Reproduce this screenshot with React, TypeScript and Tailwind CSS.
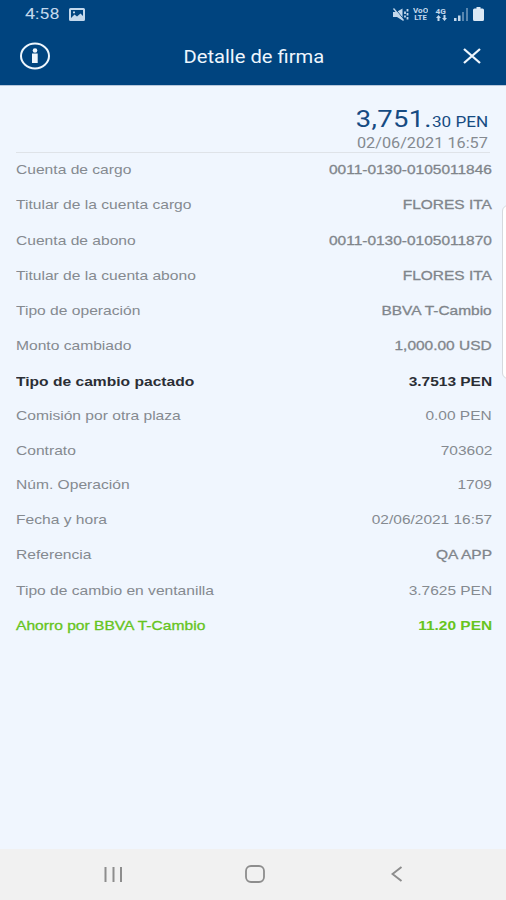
import { clsx } from "clsx";

type Tone = "plain" | "medium" | "strong" | "saving";

type Detail = {
  label: string;
  value: string;
  tone: Tone;
  height?: string;
};

const details: Detail[] = [
  { label: "Cuenta de cargo", value: "0011-0130-0105011846", tone: "medium" },
  { label: "Titular de la cuenta cargo", value: "FLORES ITA", tone: "medium", height: "h-9" },
  { label: "Cuenta de abono", value: "0011-0130-0105011870", tone: "medium" },
  { label: "Titular de la cuenta abono", value: "FLORES ITA", tone: "medium" },
  { label: "Tipo de operación", value: "BBVA T-Cambio", tone: "medium" },
  { label: "Monto cambiado", value: "1,000.00 USD", tone: "medium", height: "h-9" },
  { label: "Tipo de cambio pactado", value: "3.7513 PEN", tone: "strong", height: "h-[34px]" },
  { label: "Comisión por otra plaza", value: "0.00 PEN", tone: "plain" },
  { label: "Contrato", value: "703602", tone: "plain", height: "h-[34px]" },
  { label: "Núm. Operación", value: "1709", tone: "plain" },
  { label: "Fecha y hora", value: "02/06/2021 16:57", tone: "plain" },
  { label: "Referencia", value: "QA APP", tone: "medium", height: "h-9" },
  { label: "Tipo de cambio en ventanilla", value: "3.7625 PEN", tone: "plain" },
  { label: "Ahorro por BBVA T-Cambio", value: "11.20 PEN", tone: "saving" },
];

const labelTone: Record<Tone, string> = {
  plain: "text-[#858a90]",
  medium: "text-[#858a90]",
  strong: "font-bold text-[#2b2e35]",
  saving: "text-[#66c420] [-webkit-text-stroke:0.3px_#66c420]",
};

const valueTone: Record<Tone, string> = {
  plain: "text-[#858a90]",
  medium: "text-[#80858b] [-webkit-text-stroke:0.3px_#80858b]",
  strong: "font-bold text-[#2b2e35]",
  saving: "font-bold text-[#66c420]",
};

function StatusBar() {
  return (
    <div className="flex h-7 items-center justify-between pr-[22px] pl-[25px] text-[#c3d8ec]">
      <div className="flex items-center gap-[9px]">
        <span className="w-[35px] origin-left scale-x-[1.19] text-[15px] leading-none">4:58</span>
        <svg width="16" height="13" viewBox="0 0 16 13">
          <path
            fill="currentColor"
            fillRule="evenodd"
            d="M1.5 0h13A1.5 1.5 0 0 1 16 1.5v10a1.5 1.5 0 0 1-1.5 1.5h-13A1.5 1.5 0 0 1 0 11.5v-10A1.5 1.5 0 0 1 1.5 0ZM2 2v8l3.5-3.5 2.5 2 3.5-3L14 8V2Zm2 1.5h2v1.7H4Z"
          />
        </svg>
      </div>
      <div className="flex items-center">
        <svg width="16" height="13" viewBox="0 0 16 13" fill="none" stroke="currentColor">
          <path fill="currentColor" stroke="none" d="M0 4h3.500L9.500 0.500v12L4 9H0Z" />
          <path d="m1.500 0 9 11" stroke="#00447f" strokeWidth="1" />
          <path d="m0.500 0.500 10 12" strokeWidth="1.300" />
          <path d="M12 3.500v6M14.500 1v11" strokeWidth="1.800" strokeDasharray="2.500 1.500" />
        </svg>
        <div className="ml-[4px] flex w-4 flex-col items-center gap-px text-[7px] leading-[6px] font-bold">
          <span className="h-1.5 scale-x-[1.15] overflow-hidden">VoO</span>
          <span className="h-1.5 scale-x-[1.15] overflow-hidden">LTE</span>
        </div>
        <div className="ml-[6px] flex w-3 flex-col items-center text-[7.500px] leading-[7px] font-bold">
          <span className="scale-x-110">4G</span>
          <svg width="11" height="6" viewBox="0 0 11 6" fill="currentColor">
            <path d="M2.500 0 5 3H3.500v3h-2V3H0ZM8.500 6 6 3h1.500V0h2v3H11Z" />
          </svg>
        </div>
        <svg className="ml-[7px]" width="15" height="13" viewBox="0 0 15 13" fill="currentColor">
          <path d="M0 10h2.500v3H0ZM4 7.500h2.500V13H4Z" />
          <path opacity="0.45" d="M8 4h2v9H8ZM12 0h2v13h-2Z" />
        </svg>
        <svg className="ml-[4px]" width="11" height="14" viewBox="0 0 11 14" fill="#dce9f5">
          <path d="M3.500 0h4v1.500H9.500A1.500 1.500 0 0 1 11 3v9.500A1.500 1.500 0 0 1 9.500 14h-8A1.500 1.500 0 0 1 0 12.500V3a1.500 1.500 0 0 1 1.500-1.500h2Z" />
        </svg>
      </div>
    </div>
  );
}

function TitleBar() {
  return (
    <div className="flex h-14 items-center justify-between pr-[25px] pl-5 text-[#eef6fd]">
      <svg width="30" height="28" viewBox="0 0 30 28" fill="none" stroke="currentColor">
        <ellipse cx="15" cy="14" rx="14" ry="12.400" strokeWidth="2" />
        <circle cx="15" cy="8.500" r="2.300" fill="currentColor" stroke="none" />
        <path d="M12 11.500h5.700v9.500h-5.700Z" fill="currentColor" stroke="none" />
      </svg>
      <h1 className="mt-0.5 mr-[5px] origin-center scale-x-[1.12] text-[18px] leading-none">Detalle de firma</h1>
      <svg width="18" height="16" viewBox="0 0 18 16" fill="none" stroke="currentColor">
        <path d="m1 1 16 14M17 1 1 15" strokeWidth="2.300" />
      </svg>
    </div>
  );
}

function Amount() {
  return (
    <div className="mx-4 flex h-[67px] flex-col items-end border-b border-[#dfe3e8] pt-5 pr-[2px]">
      <p className="origin-right scale-x-[1.14] text-[24px] leading-[26px] whitespace-nowrap text-[#164b82]">
        <span className="tracking-[0.3px]">3,751.</span>
        <span className="text-[15px]">30 PEN</span>
      </p>
      <p className="origin-right scale-x-[1.16] text-[14px] leading-4 whitespace-nowrap text-[#858a90]">
        02/06/2021 16:57
      </p>
    </div>
  );
}

function DetailRow({ label, value, tone, height = "h-[35px]" }: Detail) {
  return (
    <div className={clsx("flex items-start justify-between whitespace-nowrap", height)}>
      <dt className={clsx("origin-left scale-x-[1.2]", labelTone[tone])}>{label}</dt>
      <dd className={clsx("origin-right scale-x-[1.19]", valueTone[tone])}>{value}</dd>
    </div>
  );
}

function NavigationBar() {
  return (
    <nav className="flex h-[51px] items-center justify-between bg-[#f1f1f1] pr-[103px] pb-px pl-[104px] text-[#8d8d8d]">
      <svg width="19" height="17" viewBox="0 0 19 17" fill="none" stroke="currentColor">
        <path d="M1.500 1v15M9.500 1v15M17 1v15" strokeWidth="2" />
      </svg>
      <svg className="mr-[5px]" width="22" height="18" viewBox="0 0 22 18" fill="none" stroke="currentColor">
        <rect x="2" y="1" width="18" height="16" rx="5" strokeWidth="1.800" />
      </svg>
      <svg width="12" height="16" viewBox="0 0 12 16" fill="none" stroke="currentColor">
        <path d="M10.500 1 1.500 8l9 7" strokeWidth="2" />
      </svg>
    </nav>
  );
}

export default function App() {
  return (
    <div className="relative flex h-[900px] w-[506px] flex-col overflow-hidden bg-[#f0f6fe] font-[Roboto,sans-serif]">
      <header className="h-[85px] shrink-0 bg-[#00447f]">
        <StatusBar />
        <TitleBar />
      </header>

      <main className="flex-1 border-t border-[#b7c8dc]">
        <Amount />
        <dl className="pt-[9px] pr-[14px] pl-[15.500px] font-['Liberation_Sans',Arial,sans-serif] text-[13px] leading-4">
          {details.map((detail) => (
            <DetailRow key={detail.label} {...detail} />
          ))}
        </dl>
      </main>

      {/* edge panel handle */}
      <div className="absolute top-[205px] -right-2 h-[174px] w-[12px] rounded-md border border-[#d5d9de] bg-white" />

      <NavigationBar />
    </div>
  );
}
